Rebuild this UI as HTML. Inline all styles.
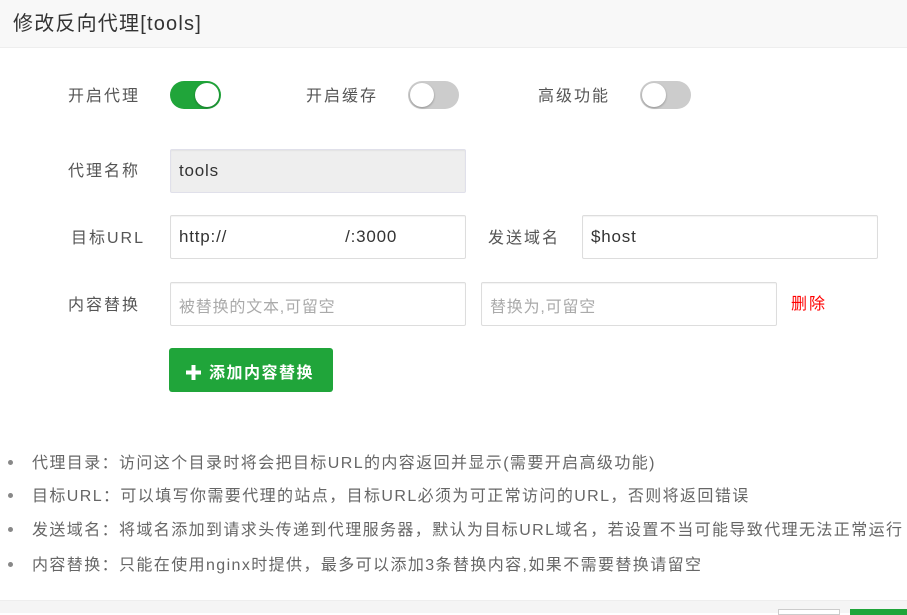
<!DOCTYPE html>
<html><head><meta charset="utf-8"><style>
*{margin:0;padding:0;box-sizing:border-box}
body{width:907px;height:613px;background:#fff;position:relative;overflow:hidden;font-family:"Liberation Sans","Noto Sans CJK SC",sans-serif;color:#333}
.a{position:absolute;white-space:nowrap}
.hd{left:0;top:0;width:907px;height:48px;background:#f8f8f8;border-bottom:1px solid #eee}
.tt{left:13px;top:7px;font-size:20px;letter-spacing:1.2px;color:#333}
.lb{font-size:16px;letter-spacing:2px;color:#555}
.tg{width:51px;height:28px;border-radius:14px;background:#ccc}
.tg i{position:absolute;top:2px;width:24px;height:24px;border-radius:50%;background:#fff;box-shadow:0 1px 2px rgba(0,0,0,.3)}
.in{height:44px;border:1px solid #ddd;border-radius:2px;font-size:17px;letter-spacing:.8px;padding:11px 8px;color:#333;box-shadow:inset 0 1px 1px rgba(0,0,0,.05)}
.ph{color:#aaa;font-size:16px;letter-spacing:.8px;padding-top:10px}
.li{font-size:16px;letter-spacing:1.4px;color:#666;left:32px}
.dot{left:8px;width:5px;height:5px;border-radius:50%;background:#888}
</style></head><body>
<div class="a hd"></div>
<div class="a tt">修改反向代理[tools]</div>

<div class="a lb" style="left:68px;top:82px">开启代理</div>
<div class="a tg" style="left:170px;top:81px;background:#20a53a"><i style="left:25px"></i></div>
<div class="a lb" style="left:306px;top:82px">开启缓存</div>
<div class="a tg" style="left:408px;top:81px"><i style="left:2px"></i></div>
<div class="a lb" style="left:538px;top:82px">高级功能</div>
<div class="a tg" style="left:640px;top:81px"><i style="left:2px"></i></div>

<div class="a lb" style="left:68px;top:157px">代理名称</div>
<div class="a in" style="left:170px;top:149px;width:296px;background:#eee;border-color:#e0e0ea">tools</div>

<div class="a lb" style="left:71px;top:224px">目标URL</div>
<div class="a in" style="left:170px;top:215px;width:296px">http://<span style="margin-left:118px">/:3000</span></div>
<div class="a lb" style="left:488px;top:224px">发送域名</div>
<div class="a in" style="left:582px;top:215px;width:296px">$host</div>

<div class="a lb" style="left:68px;top:291px">内容替换</div>
<div class="a in ph" style="left:170px;top:282px;width:296px">被替换的文本,可留空</div>
<div class="a in ph" style="left:481px;top:282px;width:296px">替换为,可留空</div>
<div class="a" style="left:791px;top:290px;font-size:16px;letter-spacing:2px;color:#f00">删除</div>

<div class="a" style="left:169px;top:348px;width:164px;height:44px;background:#20a53a;border-radius:3px;color:#fff;font-size:16px;letter-spacing:1.5px;font-weight:bold;padding:11px 0 0 17px">
<svg width="15" height="15" viewBox="0 0 15 15" style="vertical-align:-2px;margin-right:8px"><rect x="5.5" y="0" width="4" height="15" fill="#fff"/><rect x="0" y="5.5" width="15" height="4" fill="#fff"/></svg>添加内容替换</div>

<div class="a dot" style="top:460px"></div><div class="a li" style="top:449px">代理目录：访问这个目录时将会把目标URL的内容返回并显示(需要开启高级功能)</div>
<div class="a dot" style="top:493px"></div><div class="a li" style="top:482px">目标URL：可以填写你需要代理的站点，目标URL必须为可正常访问的URL，否则将返回错误</div>
<div class="a dot" style="top:527px"></div><div class="a li" style="top:516px">发送域名：将域名添加到请求头传递到代理服务器，默认为目标URL域名，若设置不当可能导致代理无法正常运行</div>
<div class="a dot" style="top:562px"></div><div class="a li" style="top:551px">内容替换：只能在使用nginx时提供，最多可以添加3条替换内容,如果不需要替换请留空</div>

<div class="a" style="left:0;top:600px;width:907px;height:13px;background:#f5f5f5;border-top:1px solid #eee"></div>
<div class="a" style="left:778px;top:609px;width:62px;height:6px;border:1px solid #ccc;background:#fff"></div>
<div class="a" style="left:850px;top:609px;width:57px;height:6px;background:#20a53a"></div>
</body></html>
